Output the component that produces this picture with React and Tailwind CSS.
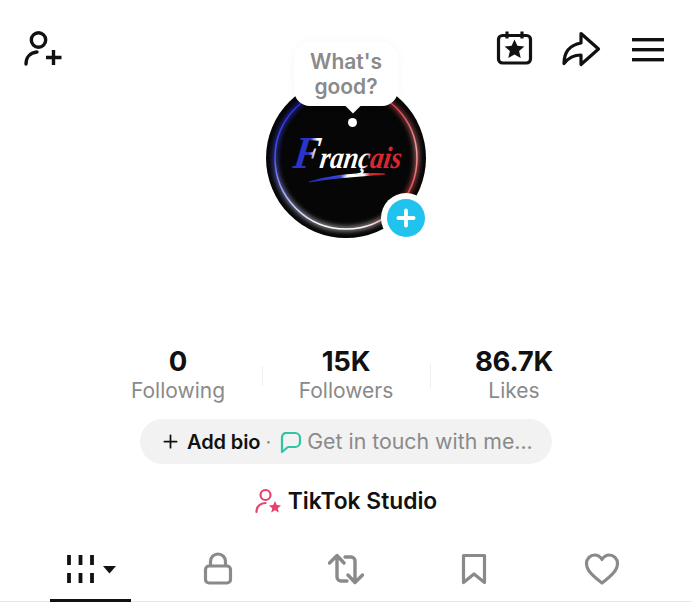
import { Plus } from 'lucide-react';

const GRAY = '#8a8a8a';

function AddFriendIcon() {
  return (
    <svg width="40" height="40" viewBox="0 0 40 40" fill="none" stroke="#111" strokeWidth="3.400" strokeLinecap="round">
      <circle cx="15.500" cy="10" r="7.200" />
      <path d="M3 34c0-7 4.500-11.500 11-12" />
      <path d="M23 27.500h15.500M30.500 20v15" strokeLinecap="butt" />
    </svg>
  );
}

function CalendarStarIcon() {
  return (
    <svg width="38" height="38" viewBox="0 0 38 38" fill="none" stroke="#111" strokeWidth="3.200">
      <rect x="2.500" y="5.500" width="32" height="27.500" rx="4" />
      <path d="M11 1.500v7M26 1.500v7" />
      <path d="M18.500 9.500l2.900 6.300 7 .7-5.300 4.600 1.600 6.800-6.200-3.500-6.200 3.500 1.600-6.800-5.300-4.600 7-.7z" fill="#111" stroke="none" />
    </svg>
  );
}

function ShareIcon() {
  return (
    <svg width="42" height="38" viewBox="0 0 42 38" fill="none" stroke="#111" strokeWidth="3.200" strokeLinejoin="round">
      <path d="M19 3.500L36.500 19 19 34.500v-9.500c-7 0-12 2-17 8.500 0-9 3.500-18 17-20.500z" />
    </svg>
  );
}

function MenuIcon() {
  return (
    <svg width="36" height="30" viewBox="0 0 36 30" fill="#111">
      <rect x="2" y="3" width="32" height="3.400" />
      <rect x="2" y="13" width="32" height="3.400" />
      <rect x="2" y="23" width="32" height="3.400" />
    </svg>
  );
}

function FrancaisLogo() {
  return (
    <svg width="160" height="160" viewBox="0 0 160 160" className="block">
      <defs>
        <linearGradient id="ringLeft" x1="0" y1="0" x2="0" y2="1">
          <stop offset="0" stopColor="#2020d8" />
          <stop offset="0.5" stopColor="#4a52f0" />
          <stop offset="0.85" stopColor="#cfd2ff" />
          <stop offset="1" stopColor="#ffffff" />
        </linearGradient>
        <linearGradient id="ringRight" x1="0" y1="0" x2="0" y2="1">
          <stop offset="0" stopColor="#c02028" />
          <stop offset="0.45" stopColor="#f7a0a0" />
          <stop offset="0.8" stopColor="#e03a40" />
          <stop offset="1" stopColor="#ffffff" />
        </linearGradient>
        <linearGradient id="word" x1="0" y1="0" x2="1" y2="0">
          <stop offset="0.14" stopColor="#2a34c8" />
          <stop offset="0.2" stopColor="#ffffff" />
          <stop offset="0.66" stopColor="#ffffff" />
          <stop offset="0.72" stopColor="#d9262f" />
        </linearGradient>
        <linearGradient id="brush" x1="0" y1="0" x2="1" y2="0">
          <stop offset="0" stopColor="#1d2bb0" />
          <stop offset="0.42" stopColor="#3b49e0" />
          <stop offset="0.5" stopColor="#ffffff" />
          <stop offset="0.72" stopColor="#ffffff" />
          <stop offset="0.8" stopColor="#d9262f" />
        </linearGradient>
        <filter id="glow" x="-20%" y="-20%" width="140%" height="140%">
          <feGaussianBlur stdDeviation="2.500" />
        </filter>
      </defs>
      <circle cx="80" cy="80" r="80" fill="#060606" />
      <path d="M80 151A71 71 0 0 1 80 9" fill="none" stroke="url(#ringLeft)" strokeWidth="4" filter="url(#glow)" opacity="0.7" />
      <path d="M80 9A71 71 0 0 1 80 151" fill="none" stroke="url(#ringRight)" strokeWidth="4" filter="url(#glow)" opacity="0.7" />
      <path d="M80 151A71 71 0 0 1 80 9" fill="none" stroke="url(#ringLeft)" strokeWidth="1.500" />
      <path d="M80 9A71 71 0 0 1 80 151" fill="none" stroke="url(#ringRight)" strokeWidth="1.500" />
      <text x="39" y="90" transform="skewX(-8)" fill="url(#word)" fontFamily="'Liberation Serif', serif" fontStyle="italic" fontWeight="700" fontSize="31" textLength="108" lengthAdjust="spacingAndGlyphs">
        <tspan fontSize="46">F</tspan>rançais
      </text>
      <path d="M43 104C68 97 96 95 119 96C96 98 68 99 43 104z" fill="url(#brush)" stroke="url(#brush)" strokeWidth="1.200" />
    </svg>
  );
}

function Avatar() {
  return (
    <div className="relative w-[160px] h-[160px] self-center">
      <FrancaisLogo />
      {/* speech bubble */}
      <div className="absolute left-[28px] top-[-36px] w-[104px] h-[64px] rounded-[16px] bg-white shadow-[0_0_10px_rgba(0,0,0,0.04)] flex items-center justify-center text-center text-[21px] leading-[25px] font-semibold text-[#8a8a8a]">
        What's<br />good?
        <span className="absolute left-[53px] bottom-[-5px] w-[12px] h-[12px] rotate-45 bg-white" />
      </div>
      <span className="absolute left-[82px] top-[40px] w-[9px] h-[9px] rounded-full bg-white" />
      {/* add story badge */}
      <div className="absolute left-[115px] top-[115px] w-[50px] h-[50px] rounded-full bg-white flex items-center justify-center">
        <div className="w-[38px] h-[38px] rounded-full bg-[#1fc3ee] flex items-center justify-center">
          <Plus className="w-[26px] h-[26px] text-white" strokeWidth={3.5} />
        </div>
      </div>
    </div>
  );
}

function Stat({ value, label }) {
  return (
    <div className="w-[167px] flex flex-col items-center">
      <span className="text-[27.500px] leading-[30px] font-bold tracking-[-0.2px] text-[#111]">{value}</span>
      <span className="text-[21px] leading-[30px] text-[#8a8a8a]">{label}</span>
    </div>
  );
}

function PostsIcon() {
  return (
    <svg width="52" height="36" viewBox="0 0 52 36" fill="#111">
      <path d="M5 4v10M16.500 4v10M28 4v10M5 22v10M16.500 22v10M28 22v10" stroke="#111" strokeWidth="3.800" />
      <path d="M39 15h13l-6.500 7.500z" />
    </svg>
  );
}

function LockIcon() {
  return (
    <svg width="36" height="36" viewBox="0 0 36 36" fill="none" stroke={GRAY} strokeWidth="3.200" strokeLinejoin="round">
      <rect x="5.500" y="15" width="25" height="17" rx="3.500" />
      <path d="M10.500 15V10.500a7.500 7.500 0 0 1 15 0V15" />
    </svg>
  );
}

function RepostIcon() {
  return (
    <svg width="36" height="36" viewBox="0 0 36 36" fill="none" stroke={GRAY} strokeWidth="3.400" strokeLinecap="round" strokeLinejoin="round">
      <path d="M1.500 12L9 4.500 16 12M9 5v21a4 4 0 0 0 4 4h6" />
      <path d="M34.500 24L27 31.500 20 24M27 31V10a4 4 0 0 0-4-4h-6" />
    </svg>
  );
}

function BookmarkIcon() {
  return (
    <svg width="36" height="36" viewBox="0 0 36 36" fill="none" stroke={GRAY} strokeWidth="3.200" strokeLinejoin="round">
      <path d="M7.500 4.500h21v27L18 23 7.500 31.500z" />
    </svg>
  );
}

function HeartIcon() {
  return (
    <svg width="36" height="36" viewBox="0 0 36 36" fill="none" stroke={GRAY} strokeWidth="3.200" strokeLinejoin="round">
      <path d="M18 32C9 25 2.500 19.500 2.500 12.500 2.500 7.500 6.500 4 10.500 4c3 0 5.700 1.500 7.500 4.500C19.800 5.500 22.500 4 25.500 4c4 0 8 3.500 8 8.500C33.500 19.500 27 25 18 32z" />
    </svg>
  );
}

export default function App() {
  return (
    <div className="w-full h-screen overflow-hidden bg-white flex flex-col font-['Inter','Liberation_Sans',sans-serif]">
      {/* Top bar */}
      <div className="h-[78px] flex justify-between pl-[23px] pr-[26px] pt-[30px]">
        <AddFriendIcon />
        <div className="flex items-start">
          <CalendarStarIcon />
          <div className="ml-[28px]"><ShareIcon /></div>
          <div className="ml-[26px] pt-[5px]"><MenuIcon /></div>
        </div>
      </div>

      <Avatar />

      {/* Stats */}
      <div className="mt-[108px] flex items-center justify-center">
        <Stat value="0" label="Following" />
        <span className="w-px h-[20px] bg-[#efefef]" />
        <Stat value="15K" label="Followers" />
        <span className="w-px h-[24px] bg-[#efefef]" />
        <Stat value="86.7K" label="Likes" />
      </div>

      {/* Bio pill */}
      <div className="mt-[13px] self-center w-[412px] h-[45px] rounded-full bg-[#f2f2f2] flex items-center pl-[20px] text-[20px] whitespace-nowrap">
        <Plus className="w-[21px] h-[21px] text-[#111]" strokeWidth={2} />
        <span className="ml-[6px] font-semibold tracking-[-0.1px] text-[#111]">Add bio</span>
        <span className="ml-[5px] text-[#8a8a8a]">·</span>
        <svg width="22" height="24" viewBox="0 0 22 24" fill="none" stroke="#2fc4a2" strokeWidth="2.200" strokeLinejoin="round" className="ml-[8px]">
          <path d="M6 3h10a5 5 0 0 1 5 5v4a5 5 0 0 1-5 5H9l-6 5V8a5 5 0 0 1 3-5z" />
        </svg>
        <span className="ml-[6px] text-[21.300px] text-[#8a8a8a]">Get in touch with me...</span>
      </div>

      {/* Studio link */}
      <div className="mt-[22px] h-[30px] flex items-center justify-center gap-[6px]">
        <svg width="27" height="26" viewBox="0 0 27 26" fill="none" stroke="#e8426c" strokeWidth="2.200" strokeLinecap="round">
          <circle cx="10.500" cy="7" r="5" />
          <path d="M1.500 24c0-5.500 3.500-8.500 9-9" />
          <path d="M20 13l1.800 4 4.300.4-3.300 2.900 1 4.300-3.800-2.300-3.800 2.300 1-4.300-3.300-2.900 4.300-.4z" fill="#e8426c" stroke="none" />
        </svg>
        <span className="text-[22.800px] font-semibold text-[#111]">TikTok Studio</span>
      </div>

      {/* Tabs */}
      <div className="mt-[34px] h-[52px] border-b border-[#e8e8e8] grid grid-cols-5 px-[26px]">
        <div className="relative flex justify-center pt-[1px]">
          <PostsIcon />
          <span className="absolute left-[24px] bottom-[-1px] w-[81px] h-[3px] bg-[#111]" />
        </div>
        <div className="flex justify-center pt-[1px]"><LockIcon /></div>
        <div className="flex justify-center pt-[1px]"><RepostIcon /></div>
        <div className="flex justify-center pt-[1px]"><BookmarkIcon /></div>
        <div className="flex justify-center pt-[1px]"><HeartIcon /></div>
      </div>
    </div>
  );
}
